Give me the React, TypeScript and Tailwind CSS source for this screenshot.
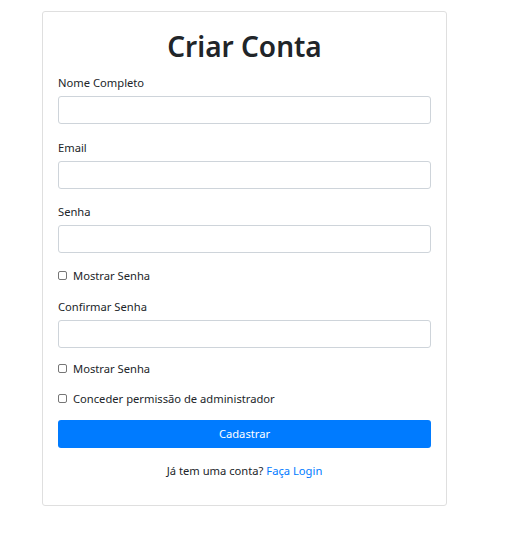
import { useState } from 'react'

function Field({ label, type = 'text' }: { label: string; type?: string }) {
  return (
    <div className="flex flex-col">
      <label className="mb-[5px] h-[18px] leading-[19px]">{label}</label>
      <input
        type={type}
        className="h-[28px] w-full rounded-[3px] border border-[#ced4da] bg-white px-[9px] outline-none"
      />
    </div>
  )
}

function Check({ label }: { label: string }) {
  return (
    <label className="flex h-[18px] items-center leading-[18px]">
      <span className="mt-[-1px] mr-[6px] h-[9px] w-[9px] rounded-[2px] border border-[#767676] bg-white" />
      <span>{label}</span>
    </label>
  )
}

export default function App() {
  const [, setSubmitted] = useState(false)

  return (
    <div className="min-h-[558px] bg-white pt-[11px] text-[11.2px] text-[#212529] [font-family:'Noto_Sans',sans-serif]">
      <div className="ml-[42px] w-[405px] rounded-[3px] border border-[#dfdfdf] px-[15px] pt-[15px] pb-[15px]">
        <h2 className="h-[36px] text-center text-[28px] leading-[38px] font-semibold">Criar Conta</h2>
        <div className="mt-[10px]">
          <Field label="Nome Completo" />
        </div>
        <div className="mt-[14px]">
          <Field label="Email" type="email" />
        </div>
        <div className="mt-[13px]">
          <Field label="Senha" type="password" />
        </div>
        <div className="mt-[14px]">
          <Check label="Mostrar Senha" />
        </div>
        <div className="mt-[12px]">
          <Field label="Confirmar Senha" type="password" />
        </div>
        <div className="mt-[12px]">
          <Check label="Mostrar Senha" />
        </div>
        <div className="mt-[12px]">
          <Check label="Conceder permissão de administrador" />
        </div>
        <button
          type="button"
          onClick={() => setSubmitted(true)}
          className="mt-[12px] h-[28px] w-full rounded-[3px] bg-[#007bff] text-white"
        >
          Cadastrar
        </button>
        <p className="mt-[14px] h-[18px] text-center leading-[18px]">
          Já tem uma conta? <a className="text-[#007bff]">Faça Login</a>
        </p>
        <div className="h-[10px]" />
      </div>
    </div>
  )
}
